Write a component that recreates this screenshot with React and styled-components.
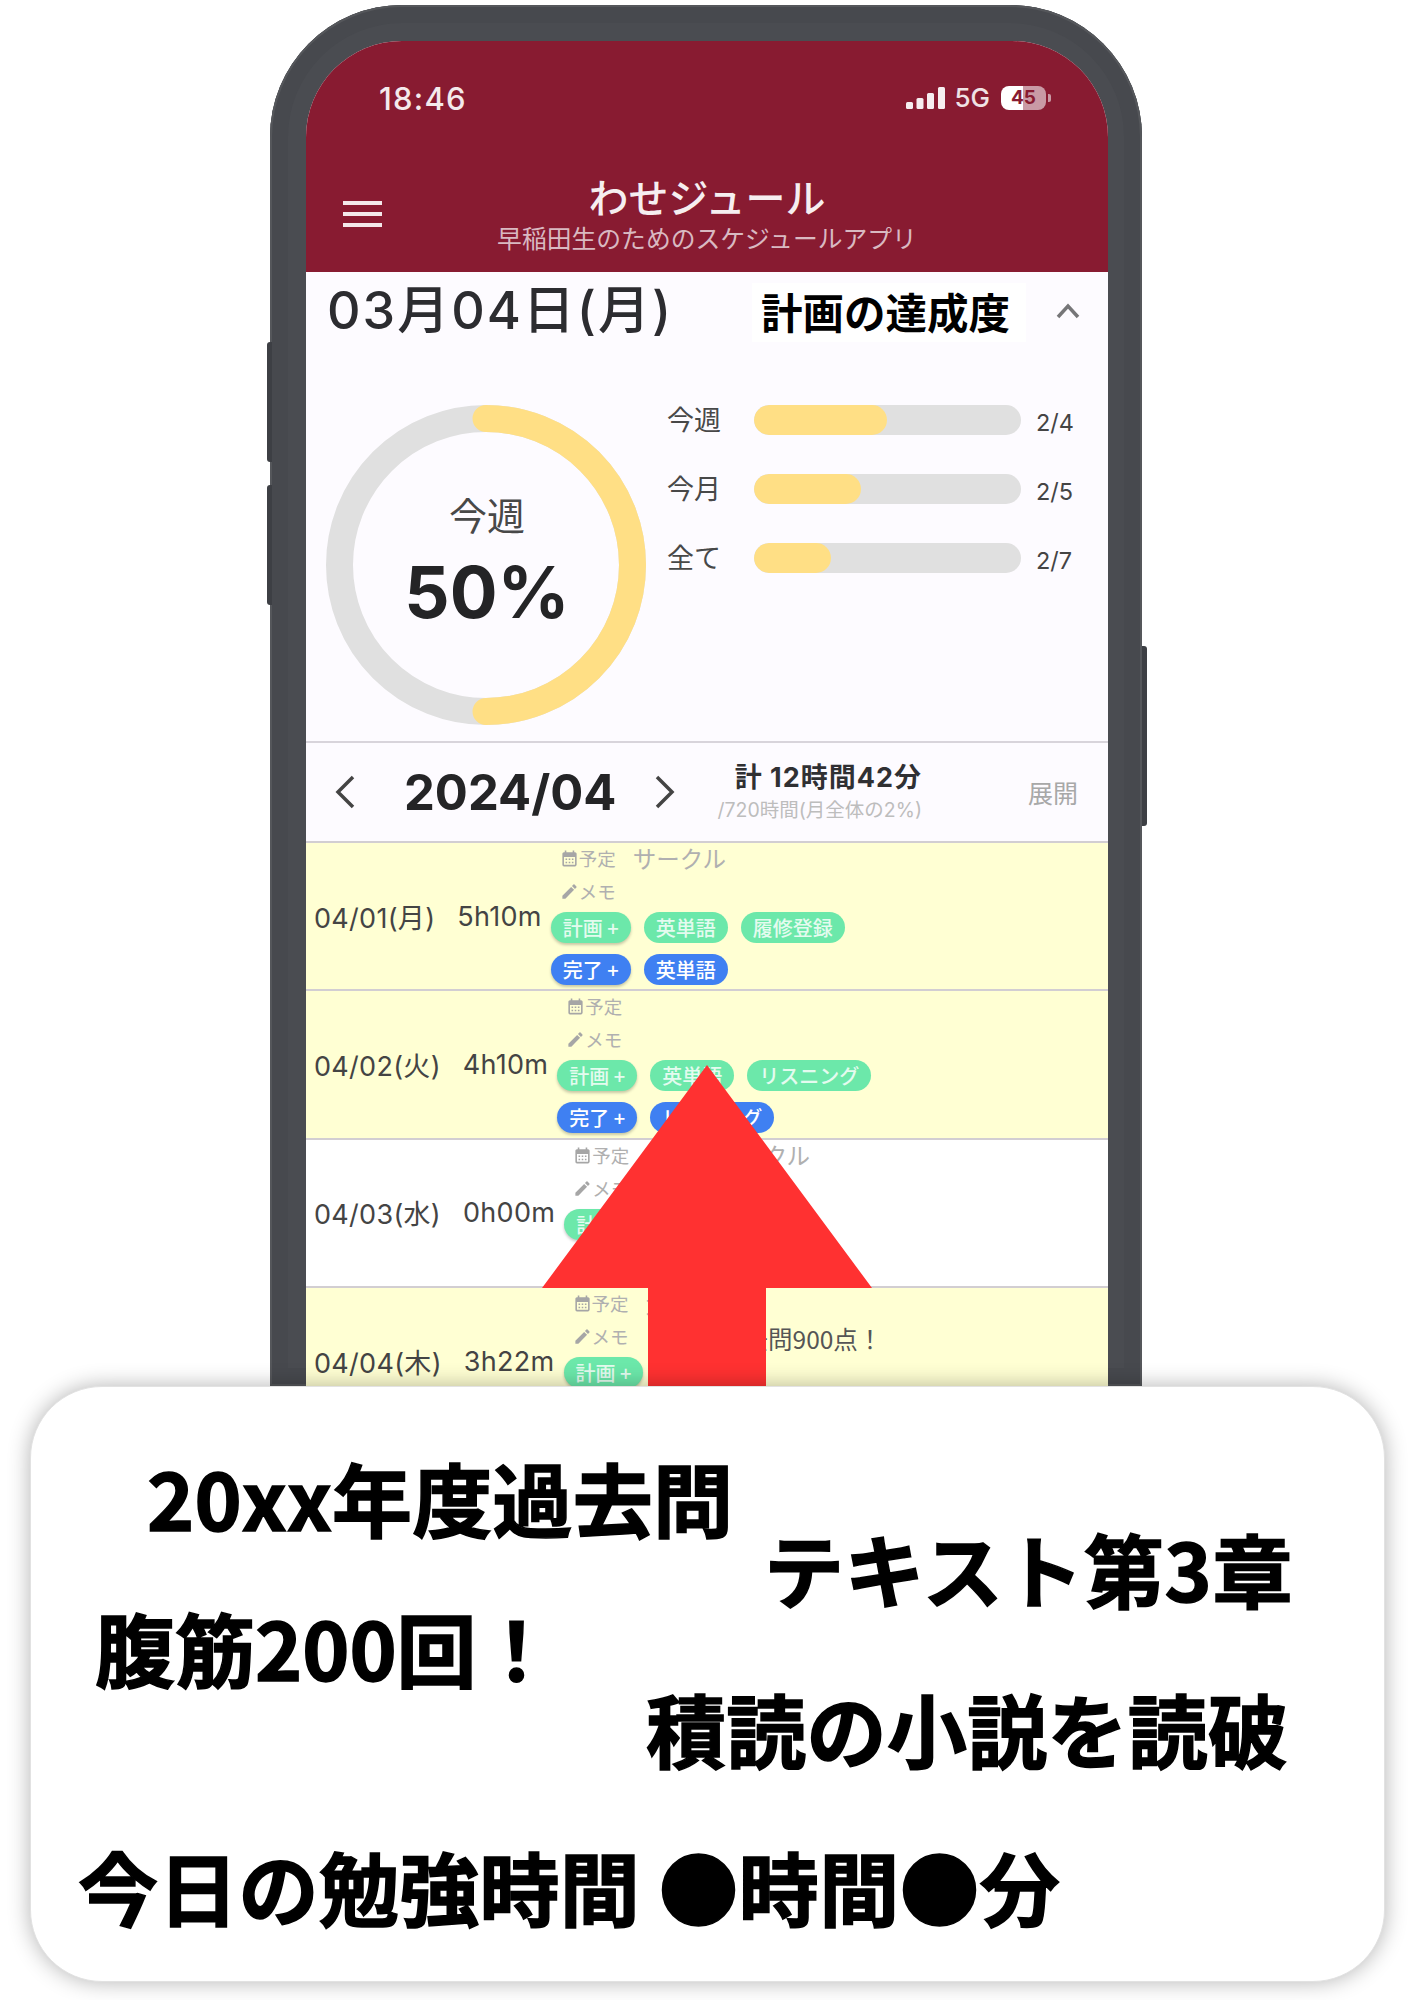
import React from "react";
import styled, { createGlobalStyle } from "styled-components";
import { MdCalendarMonth, MdEdit } from "react-icons/md";

const UI = `Inter, "Noto Sans CJK JP", sans-serif`;
const CJK = `"Noto Sans CJK JP", sans-serif`;

const Global = createGlobalStyle`
  html, body { margin: 0; background: #fff; }
  * { box-sizing: border-box; }
`;

const Stage = styled.div`
  width: 1414px;
  height: 2000px;
  overflow: hidden;
  padding-top: 5px;
  font-family: ${UI};
`;

const Phone = styled.div`
  position: relative;
  margin-left: 270px;
  width: 872px;
  height: 1381px;
  padding: 36px 34px 0 36px;
  background: #4a4c51;
  border-radius: 132px 132px 0 0;
  box-shadow: inset 0 0 0 2px #55575b, inset 0 0 0 18px #47494e;
`;

const SideKey = styled.span`
  position: absolute;
  top: ${p => p.$top}px;
  height: ${p => p.$h}px;
  width: 5px;
  background: #3d3f44;
  ${p => (p.$right ? "right: -5px; border-radius: 0 3px 3px 0;" : "left: -3px; border-radius: 3px 0 0 3px;")}
`;

const Screen = styled.div`
  position: relative;
  height: 100%;
  overflow: hidden;
  background: #fdfbff;
  border-radius: 96px 96px 0 0;
`;

const Header = styled.header`
  height: 231px;
  padding-top: 32px;
  background: #881b31;
  color: #fff;
`;

const StatusBar = styled.div`
  display: flex;
  align-items: center;
  height: 50px;
  padding-left: 73px;
`;

const Clock = styled.span`
  font: 500 31px/1 Inter, sans-serif;
  letter-spacing: 1.2px;
  color: #f4eaec;
`;

const StatusRight = styled.div`
  margin-left: auto;
  padding-right: 57px;
  display: flex;
  align-items: center;
`;

const FiveG = styled.span`
  font: 500 26px/1 Inter, sans-serif;
  margin: 0 11px 0 9px;
  color: #f0e2e5;
`;

const Battery = styled.span`
  width: 45px;
  height: 24px;
  border-radius: 8px;
  background: linear-gradient(90deg, #fff 50%, #c99aa5 50%);
  color: #881b31;
  font: 700 19px/24px Inter, sans-serif;
  text-align: center;
`;

const BatteryTip = styled.span`
  width: 3px;
  height: 8px;
  margin-left: 2px;
  border-radius: 0 2px 2px 0;
  background: #c99aa5;
`;

const AppBar = styled.div`
  display: grid;
  grid-template-columns: 1fr auto 1fr;
  align-items: center;
  margin-top: 50px;
`;

const Burger = styled.div`
  display: flex;
  flex-direction: column;
  gap: 7px;
  width: 39px;
  margin-left: 37px;
  span {
    height: 4px;
    background: #f4e8ea;
  }
`;

const TitleBlock = styled.div`
  text-align: center;
  font-family: ${CJK};
`;

const AppTitle = styled.div`
  font-size: 40px;
  line-height: 46px;
  font-weight: 500;
  color: #f6eef0;
`;

const AppSub = styled.div`
  margin-top: 1px;
  font-size: 24.8px;
  line-height: 34px;
  color: #d9b9c1;
  white-space: nowrap;
`;

const DateRow = styled.div`
  display: flex;
  align-items: center;
  height: 76px;
  padding-left: 21px;
`;

const DateText = styled.div`
  width: 425px;
  padding-bottom: 8px;
  font-size: 52px;
  font-weight: 500;
  letter-spacing: 2px;
  color: #2c2c30;
  white-space: nowrap;
`;

const GoalBox = styled.div`
  width: 274px;
  height: 59px;
  margin-top: 4px;
  padding-left: 9px;
  background: #fff;
  color: #000;
  font: 700 41.5px/57px ${CJK};
  white-space: nowrap;
`;

const UpChevron = styled.svg`
  width: 24px;
  height: 16px;
  margin: 2px 0 0 30px;
  fill: none;
  stroke: #767678;
  stroke-width: 3.5;
`;

const Stats = styled.section`
  display: flex;
  gap: 21px;
  height: 395px;
  padding: 57px 0 0 20px;
  border-bottom: 2px solid #d8d4db;
`;

const RingWrap = styled.div`
  position: relative;
  width: 320px;
  height: 320px;
  flex: none;
`;

const RingSvg = styled.svg`
  display: block;
`;

const RingLabel = styled.div`
  position: absolute;
  inset: 0;
  display: flex;
  flex-direction: column;
  align-items: center;
  padding: 84px 0 0 2px;
`;

const RingWeek = styled.div`
  font: 400 38px/50px ${CJK};
  color: #484848;
`;

const RingPct = styled.div`
  margin-top: 9px;
  font: 700 71px/88px ${UI};
  color: #242426;
`;

const Bars = styled.div`
  display: flex;
  flex-direction: column;
  gap: 39px;
`;

const BarRow = styled.div`
  display: flex;
  align-items: flex-start;
  height: 30px;
`;

const BarLabel = styled.span`
  width: 87px;
  font: 400 27px/28px ${CJK};
  color: #484848;
`;

const Track = styled.div`
  width: 267px;
  height: 30px;
  border-radius: 15px;
  overflow: hidden;
  background: #e0e0e0;
`;

const Fill = styled.div`
  height: 100%;
  border-radius: 15px;
  background: #ffdf85;
`;

const BarValue = styled.span`
  margin-left: 15px;
  padding-top: 4px;
  font-size: 23.5px;
  line-height: 28px;
  color: #444;
`;

const MonthRow = styled.div`
  display: flex;
  align-items: center;
  height: 98px;
  padding-left: 28px;
`;

const Arrow = styled.svg`
  width: 22px;
  height: 36px;
  flex: none;
  fill: none;
  stroke: #444;
  stroke-width: 3.5;
  margin: ${p => p.$m};
`;

const MonthTitle = styled.div`
  width: 209px;
  margin-left: -2px;
  font-size: 49px;
  font-weight: 700;
  color: #242426;
  white-space: nowrap;
`;

const MonthInfo = styled.div`
  width: 206px;
  margin-left: 40px;
  text-align: right;
  white-space: nowrap;
`;

const MonthTotal = styled.div`
  font-size: 27px;
  line-height: 36px;
  font-weight: 700;
  letter-spacing: 1px;
  color: #303033;
`;

const MonthShare = styled.div`
  font-size: 19.5px;
  line-height: 28px;
  color: #bdbdbd;
`;

const Expand = styled.div`
  margin-left: 106px;
  font: 400 25px/1 ${CJK};
  color: #a8a8a8;
`;

const Row = styled.div`
  display: flex;
  align-items: center;
  height: 148.4px;
  padding-left: 8px;
  border-top: 2px solid #d2ced2;
  background: ${p => (p.$marked ? "#ffffd3" : "#fff")};
`;

const Day = styled.span`
  font-size: 27px;
  letter-spacing: 0.3px;
  color: #444;
  white-space: nowrap;
`;

const Hours = styled(Day)`
  margin: 0 9px 0 22px;
`;

const RowBody = styled.div`
  align-self: flex-start;
  margin-top: -1px;
`;

const Note = styled.div`
  display: flex;
  align-items: center;
  height: 33px;
  padding-left: 9px;
  font: 400 18.5px/33px ${CJK};
  color: #b0b0b0;
  white-space: nowrap;
  svg {
    width: 19px;
    height: 19px;
    color: #a6a6a6;
  }
`;

const NoteValue = styled.span`
  margin-left: 17px;
  font-size: ${p => (p.$dark ? 24.5 : 23.5)}px;
  padding-top: ${p => (p.$dark ? 4 : 0)}px;
  color: ${p => (p.$dark ? "#555" : "#b0b0b0")};
`;

const Chips = styled.div`
  display: flex;
  gap: 13px;
  margin-top: ${p => p.$mt}px;
`;

const Chip = styled.span`
  height: 31px;
  padding: 0 12px;
  border-radius: 16px;
  background: ${p => (p.$done ? "#3f80f2" : "#6ce8aa")};
  color: ${p => (p.$done ? "#fff" : "#e4fbef")};
  font: 500 20px/31px ${CJK};
  white-space: nowrap;
  box-shadow: ${p => (p.$add ? "0 2px 3px rgba(0,0,0,.22)" : "none")};
`;

const BigArrow = styled.svg`
  position: absolute;
  left: 236px;
  top: 1024px;
  width: 330px;
  height: 321px;
  fill: #ff3131;
`;

const Card = styled.section`
  position: relative;
  width: 1355px;
  height: 596px;
  margin-left: 30px;
  padding-top: 69px;
  background: #fff;
  border: 1px solid #e2e2e2;
  border-radius: 72px;
  box-shadow: 0 0 22px rgba(0, 0, 0, 0.3);
  font-family: ${CJK};
  font-weight: 700;
  -webkit-text-stroke: 1.5px #000;
  color: #000;
`;

const Line = styled.div`
  height: ${p => p.$h}px;
  padding-left: ${p => p.$x}px;
  font-size: 80px;
  line-height: 80px;
  letter-spacing: ${p => p.$ls || 0}px;
  white-space: nowrap;
`;

const rows = [
  {
    day: "04/01(月)", time: "5h10m", marked: true, plan: "サークル",
    green: ["英単語", "履修登録"], done: true, blue: ["英単語"],
  },
  {
    day: "04/02(火)", time: "4h10m", marked: true,
    green: ["英単語", "リスニング"], done: true, blue: ["リスニング"],
  },
  {
    day: "04/03(水)", time: "0h00m", plan: "ゼミ・サークル",
    green: [], blue: [],
  },
  {
    day: "04/04(木)", time: "3h22m", marked: true, plan: "大学", memo: "とある過去問900点！",
    green: ["英単語"], blue: [],
  },
];

const bars = [
  { label: "今週", width: 133, value: "2/4" },
  { label: "今月", width: 107, value: "2/5" },
  { label: "全て", width: 77, value: "2/7" },
];

export default function App() {
  return (
    <Stage>
      <Global />
      <Phone>
        <SideKey $top={337} $h={120} />
        <SideKey $top={480} $h={120} />
        <SideKey $right $top={641} $h={180} />
        <Screen>
          <Header>
            <StatusBar>
              <Clock>18:46</Clock>
              <StatusRight>
                <svg width="39" height="22" viewBox="0 0 39 22" fill="#f6eef0">
                  <rect x="0" y="15" width="7" height="7" rx="1.5" />
                  <rect x="10.5" y="11" width="7" height="11" rx="1.5" />
                  <rect x="21" y="6" width="7" height="16" rx="1.5" />
                  <rect x="32" y="0" width="7" height="22" rx="1.5" />
                </svg>
                <FiveG>5G</FiveG>
                <Battery>45</Battery>
                <BatteryTip />
              </StatusRight>
            </StatusBar>
            <AppBar>
              <Burger><span /><span /><span /></Burger>
              <TitleBlock>
                <AppTitle>わせジュール</AppTitle>
                <AppSub>早稲田生のためのスケジュールアプリ</AppSub>
              </TitleBlock>
            </AppBar>
          </Header>

          <DateRow>
            <DateText>03月04日(月)</DateText>
            <GoalBox>計画の達成度</GoalBox>
            <UpChevron viewBox="0 0 24 16"><polyline points="2,14 12,3 22,14" /></UpChevron>
          </DateRow>

          <Stats>
            <RingWrap>
              <RingSvg width="320" height="320" viewBox="0 0 320 320" fill="none">
                <circle cx="160" cy="160" r="146.5" stroke="#e0e0e0" strokeWidth="27" />
                <path d="M160 13.5 A146.5 146.5 0 0 1 160 306.5" stroke="#ffdf85" strokeWidth="27" strokeLinecap="round" />
              </RingSvg>
              <RingLabel>
                <RingWeek>今週</RingWeek>
                <RingPct>50%</RingPct>
              </RingLabel>
            </RingWrap>
            <Bars>
              {bars.map(b => (
                <BarRow key={b.label}>
                  <BarLabel>{b.label}</BarLabel>
                  <Track><Fill style={{ width: b.width }} /></Track>
                  <BarValue>{b.value}</BarValue>
                </BarRow>
              ))}
            </Bars>
          </Stats>

          <MonthRow>
            <Arrow viewBox="0 0 22 36" $m="0 50px 0 0"><polyline points="19,3 4,18 19,33" /></Arrow>
            <MonthTitle>2024/04</MonthTitle>
            <Arrow viewBox="0 0 22 36" $m="0 0 0 41px"><polyline points="3,3 18,18 3,33" /></Arrow>
            <MonthInfo>
              <MonthTotal>計 12時間42分</MonthTotal>
              <MonthShare>/720時間(月全体の2%)</MonthShare>
            </MonthInfo>
            <Expand>展開</Expand>
          </MonthRow>

          {rows.map(r => (
            <Row key={r.day} $marked={r.marked}>
              <Day>{r.day}</Day>
              <Hours>{r.time}</Hours>
              <RowBody>
                <Note>
                  <MdCalendarMonth />予定
                  {r.plan && <NoteValue>{r.plan}</NoteValue>}
                </Note>
                <Note>
                  <MdEdit />メモ
                  {r.memo && <NoteValue $dark>{r.memo}</NoteValue>}
                </Note>
                <Chips $mt={4}>
                  <Chip $add>計画 +</Chip>
                  {r.green.map(g => <Chip key={g}>{g}</Chip>)}
                </Chips>
                {r.done && (
                  <Chips $mt={11}>
                    <Chip $add $done>完了 +</Chip>
                    {r.blue.map(g => <Chip key={g} $done>{g}</Chip>)}
                  </Chips>
                )}
              </RowBody>
            </Row>
          ))}

          <BigArrow viewBox="0 0 330 321">
            <polygon points="165,0 330,223 224,223 224,321 106,321 106,223 0,223" />
          </BigArrow>
        </Screen>
      </Phone>
      <Card>
        <Line $x={116} $h={71} $ls={0.2}>20xx年度過去問</Line>
        <Line $x={733} $h={78.5} $ls={0.6}>テキスト第3章</Line>
        <Line $x={64} $h={81.5}>腹筋200回！</Line>
        <Line $x={615} $h={158} $ls={0.3}>積読の小説を読破</Line>
        <Line $x={47} $h={80} $ls={0.3}>今日の勉強時間 ●時間●分</Line>
      </Card>
    </Stage>
  );
}
